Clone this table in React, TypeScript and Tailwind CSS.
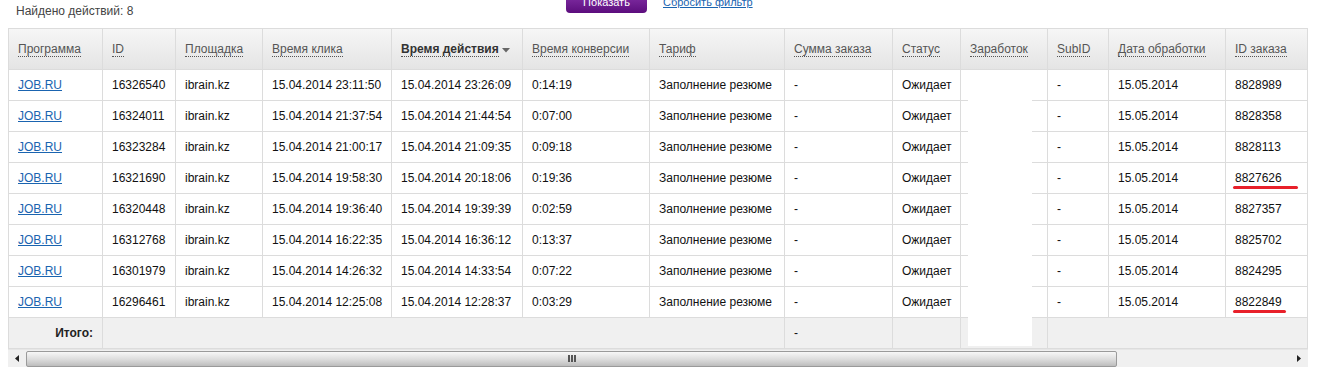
import React from "react";

const rows = [
  ["16326540", "15.04.2014 23:11:50", "15.04.2014 23:26:09", "0:14:19", "8828989"],
  ["16324011", "15.04.2014 21:37:54", "15.04.2014 21:44:54", "0:07:00", "8828358"],
  ["16323284", "15.04.2014 21:00:17", "15.04.2014 21:09:35", "0:09:18", "8828113"],
  ["16321690", "15.04.2014 19:58:30", "15.04.2014 20:18:06", "0:19:36", "8827626"],
  ["16320448", "15.04.2014 19:36:40", "15.04.2014 19:39:39", "0:02:59", "8827357"],
  ["16312768", "15.04.2014 16:22:35", "15.04.2014 16:36:12", "0:13:37", "8825702"],
  ["16301979", "15.04.2014 14:26:32", "15.04.2014 14:33:54", "0:07:22", "8824295"],
  ["16296461", "15.04.2014 12:25:08", "15.04.2014 12:28:37", "0:03:29", "8822849"],
];

const widths = [94, 73, 87, 129, 131, 127, 135, 108, 68, 87, 61, 117, 82];
const headers = [
  "Программа",
  "ID",
  "Площадка",
  "Время клика",
  "Время действия",
  "Время конверсии",
  "Тариф",
  "Сумма заказа",
  "Статус",
  "Заработок",
  "SubID",
  "Дата обработки",
  "ID заказа",
];

const td = "border border-[#dcdcdc] h-[31px] px-[9px] py-0 align-middle whitespace-nowrap overflow-hidden";

export default function App() {
  return (
    <div
      className="w-[1324px] h-[379px] bg-white overflow-hidden text-[12px] text-[#111]"
      style={{ fontFamily: '"Liberation Sans", Arial, sans-serif' }}
    >
      {/* top bar */}
      <div className="flex h-[28px] items-start">
        <div className="w-[566px] pl-[16px] pt-[4px] text-[#444] leading-[14px]">Найдено действий: 8</div>
        <div className="flex items-center h-[22px] -mt-[9px]">
          <div className="h-[22px] w-[81px] rounded-[4px] bg-gradient-to-b from-[#8a34ad] to-[#5c0c7d] text-white text-[11px] flex items-center justify-center leading-none">
            Показать
          </div>
          <a className="ml-[16px] text-[#1a64b0] underline text-[11px] leading-none">Сбросить фильтр</a>
        </div>
      </div>

      {/* table area */}
      <div className="ml-[8px] w-[1300px] relative">
        <div className="overflow-hidden w-[1300px]">
          <table className="table-fixed border-collapse w-[1299px]">
            <colgroup>
              {widths.map((w, i) => (
                <col key={i} style={{ width: w }} />
              ))}
            </colgroup>
            <thead>
              <tr className="bg-gradient-to-b from-[#f6f6f6] to-[#e4e4e4]">
                {headers.map((h, i) => (
                  <th
                    key={i}
                    className="border border-[#dcdcdc] h-[41px] px-[9px] text-left font-normal align-middle whitespace-nowrap"
                  >
                    {i === 4 ? (
                      <span className="inline-flex items-center">
                        <span className="font-bold text-[#333] border-b border-dotted border-[#555] leading-[14px]">{h}</span>
                        <svg width="8" height="5" viewBox="0 0 8 5" className="ml-[3px] mt-[1px]">
                          <path d="M0 0 L8 0 L4 4.5 Z" fill="#666" />
                        </svg>
                      </span>
                    ) : (
                      <span className="text-[#555] border-b border-dotted border-[#555] leading-[14px]">{h}</span>
                    )}
                  </th>
                ))}
              </tr>
            </thead>
            <tbody>
              {rows.map((r, i) => (
                <tr key={i}>
                  <td className={td}>
                    <a className="text-[#1a64b0] underline">JOB.RU</a>
                  </td>
                  <td className={td}>{r[0]}</td>
                  <td className={td}>ibrain.kz</td>
                  <td className={td}>{r[1]}</td>
                  <td className={td}>{r[2]}</td>
                  <td className={td}>{r[3]}</td>
                  <td className={td}>Заполнение резюме</td>
                  <td className={td}>-</td>
                  <td className={td}>Ожидает</td>
                  <td className={td}></td>
                  <td className={td}>-</td>
                  <td className={td}>15.05.2014</td>
                  <td className={td + " relative"}>
                    {r[4]}
                    {i === 3 && (
                      <span className="absolute left-[7px] top-[23px] w-[65px] h-[3px] rounded-full bg-[#e8202a]" />
                    )}
                    {i === 7 && (
                      <span className="absolute left-[7px] top-[23px] w-[53px] h-[3px] rounded-full bg-[#e8202a]" />
                    )}
                  </td>
                </tr>
              ))}
              <tr className="bg-[#f0f0f0]">
                <td className={td + " text-right font-bold text-[#222]"}>Итого:</td>
                <td className={td} colSpan={6}></td>
                <td className={td}>-</td>
                <td className={td}></td>
                <td className={td}></td>
                <td className={td} colSpan={3}></td>
              </tr>
            </tbody>
          </table>
        </div>

        {/* redaction overlay */}
        <div className="absolute left-[960px] top-[42px] w-[64px] h-[276px] bg-white" />

        {/* scrollbar */}
        <div className="flex items-center h-[18px] bg-[#f0f0f0] border-t border-[#e6e6e6]">
          <div className="w-[18px] h-full flex items-center justify-center">
            <svg width="4" height="7" viewBox="0 0 4 7">
              <path d="M4 0 L0 3.5 L4 7 Z" fill="#222" />
            </svg>
          </div>
          <div className="w-[1091px] h-[16px] rounded-[2px] border border-[#9a9a9a] bg-gradient-to-b from-[#f7f7f7] via-[#dedede] to-[#bdbdbd] flex items-center justify-center">
            <div className="flex gap-[1px]">
              <span className="w-[2px] h-[7px] bg-[#555]" />
              <span className="w-[2px] h-[7px] bg-[#555]" />
              <span className="w-[2px] h-[7px] bg-[#555]" />
            </div>
          </div>
          <div className="flex-1" />
          <div className="w-[18px] h-full flex items-center justify-center">
            <svg width="4" height="7" viewBox="0 0 4 7">
              <path d="M0 0 L4 3.5 L0 7 Z" fill="#222" />
            </svg>
          </div>
        </div>
      </div>
    </div>
  );
}
